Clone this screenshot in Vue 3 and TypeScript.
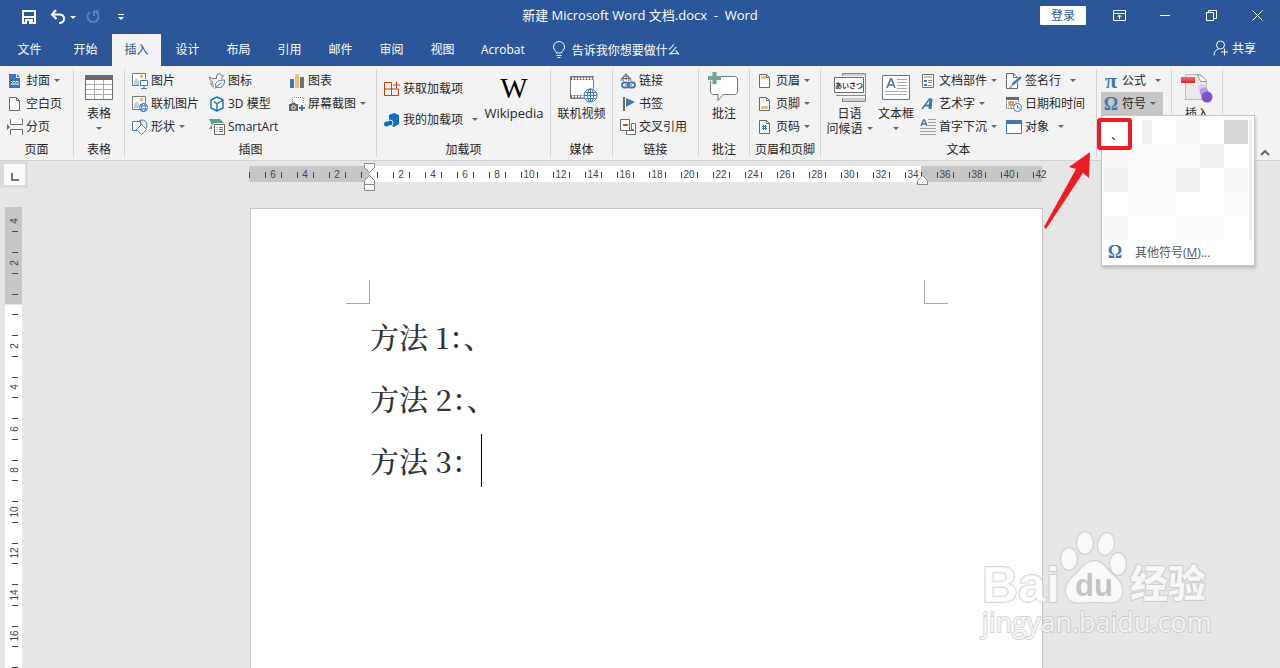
<script setup lang="ts">
interface Command {
  icon: string
  text: string
  arrow?: 'near' | 'far'
}

const tabs = ['文件', '开始', '插入', '设计', '布局', '引用', '邮件', '审阅', '视图', 'Acrobat']
const activeTab = '插入'

const pages: Command[] = [
  { icon: 'cover', text: '封面', arrow: 'near' },
  { icon: 'blank', text: '空白页' },
  { icon: 'break', text: '分页' },
]
const illustrations: Command[][] = [
  [
    { icon: 'picture', text: '图片' },
    { icon: 'online-picture', text: '联机图片' },
    { icon: 'shapes', text: '形状', arrow: 'near' },
  ],
  [
    { icon: 'icons', text: '图标' },
    { icon: 'cube', text: '3D 模型' },
    { icon: 'smartart', text: 'SmartArt' },
  ],
  [
    { icon: 'chart', text: '图表' },
    { icon: 'screenshot', text: '屏幕截图', arrow: 'near' },
  ],
]
const addins: Command[] = [
  { icon: 'store', text: '获取加载项' },
  { icon: 'my-addins', text: '我的加载项', arrow: 'far' },
]
const links: Command[] = [
  { icon: 'link', text: '链接' },
  { icon: 'bookmark', text: '书签' },
  { icon: 'crossref', text: '交叉引用' },
]
const headers: Command[] = [
  { icon: 'header', text: '页眉', arrow: 'near' },
  { icon: 'footer', text: '页脚', arrow: 'near' },
  { icon: 'page-number', text: '页码', arrow: 'near' },
]
const textTools: Command[][] = [
  [
    { icon: 'parts', text: '文档部件', arrow: 'near' },
    { icon: 'wordart', text: '艺术字', arrow: 'near' },
    { icon: 'dropcap', text: '首字下沉', arrow: 'near' },
  ],
  [
    { icon: 'signature', text: '签名行', arrow: 'far' },
    { icon: 'datetime', text: '日期和时间' },
    { icon: 'object', text: '对象', arrow: 'far' },
  ],
]

const windowButtons = [
  { label: '功能区显示选项', path: 'M.5 1.5h12v10H.5zM.5 4.5h12M6.5 10V6M4.5 8l2-2 2 2' },
  { label: '最小化', path: 'M1 6.5h10' },
  { label: '向下还原', path: 'M1.5 3.5h7v8h-7zM3.5 3.5v-2h8v8h-3' },
  { label: '关闭', path: 'M1.5 1.5l10 10M11.5 1.5l-10 10' },
]

const hTicks = Array.from({ length: 50 }, (_, i) => i * 16)
const hNumbers = Array.from({ length: 25 }, (_, i) => (i - 3) * 2)
  .filter((n) => n !== 0)
  .map((n) => ({ value: Math.abs(n), x: 120 + n * 16 }))

const vStep = 20.75
const vTicks = Array.from({ length: 22 }, (_, i) => Math.round(98 + (i - 3.5) * vStep))
const vNumbers = [-4, -2, 2, 4, 6, 8, 10, 12, 14, 16].map((n) => ({
  value: Math.abs(n),
  y: Math.round(97 + n * vStep),
}))

const mosaic = [
  'a', 'g', 'a', 'c', 'a', 'f',
  'c', 'b', 'b', 'b', 'e', 'a',
  'e', 'b', 'b', 'e', 'a', 'd',
  'a', 'b', 'b', 'a', 'a', 'b',
  'c', 'a', 'a', 'b', 'b', 'a',
]
</script>

<template>
  <div class="word">
    <svg class="sprite" aria-hidden="true">
      <symbol id="cover" viewBox="0 0 16 16">
        <path d="M2 1h7v4h4v10H2z" fill="#3f76b4" /><path d="M10 1l3 3h-3z" fill="#3f76b4" />
        <path d="M4 8l1.500 1.500L7 8l1.500 1.500L10 8l1.500 1.500M4 11h8" stroke="#fff" fill="none" />
      </symbol>
      <symbol id="blank" viewBox="0 0 16 16">
        <path d="M2.500 1.500h7l3 3v10h-10z" fill="#fff" stroke="#6a6a6a" /><path d="M9.500 1.500v3h3" fill="none" stroke="#6a6a6a" />
      </symbol>
      <symbol id="break" viewBox="0 0 16 16">
        <path d="M3 0h12v5H3zM3 11h12v5H3z" fill="#fff" /><path d="M3.500 0v5.500h12V0M3.500 16v-5.500h12V16" fill="none" stroke="#6a6a6a" />
        <path d="M0 5l3 3-3 3z" fill="#3f76b4" />
      </symbol>
      <symbol id="picture" viewBox="0 0 16 16">
        <path d="M.5.5h13v12H.5z" fill="#fff" stroke="#777" /><circle cx="9.500" cy="3.500" r="1.800" fill="#eab765" />
        <path d="M2 12V8l2.500-3L7 8v4z" fill="#bcd0e6" /><path d="M7 6h9v9H7z" fill="#f3f3f3" />
        <path d="M8.500 7.500h7v5h-7zM12 13v2M9 15.500h6" fill="#fff" stroke="#3f76b4" />
      </symbol>
      <symbol id="online-picture" viewBox="0 0 16 16">
        <path d="M.5.5h13v13H.5z" fill="#fff" stroke="#777" /><circle cx="9.500" cy="3.500" r="1.800" fill="#eab765" />
        <path d="M2 12V8l2.500-3L7 8v4z" fill="#bcd0e6" />
        <circle cx="11.500" cy="11.500" r="4" fill="#fff" stroke="#3f76b4" />
        <ellipse cx="11.500" cy="11.500" rx="2" ry="4" fill="none" stroke="#3f76b4" />
        <path d="M8 10h7M8 13h7" stroke="#3f76b4" />
      </symbol>
      <symbol id="shapes" viewBox="0 0 16 16">
        <path d="M.5 2.500h8v9h-8z" fill="#fff" stroke="#3f76b4" /><path d="M6 3a5 5 0 1 1 8 6" fill="none" stroke="#3f76b4" />
        <path d="M9.500 5.500l5 5-5 5-5-5z" fill="#fff" stroke="#3f76b4" />
      </symbol>
      <symbol id="icons" viewBox="0 0 16 16">
        <path d="M.5 4c2 2 5 1.500 7 1.500C7 2 8.500.8 10.500.8c1.500 0 2 1.200 2 1.700l2 .5-2 1.500c0 1 0 1-.5 1.500M.5 4c0 3 1 4 3 4.500-1 2 0 3 1.500 3.500M2 9.500C1.500 12 3 14 5 14" fill="none" stroke="#777" />
        <path d="M7 14c-2-5 3-7 8.500-7 .5 6-3.500 9-8.500 7z" fill="#fff" stroke="#3f76b4" /><path d="M5.500 15.500l7-6" stroke="#3f76b4" />
      </symbol>
      <symbol id="cube" viewBox="0 0 16 16">
        <path d="M8 1l6 3v8l-6 3-6-3V4z" fill="#fff" stroke="#0b70c4" stroke-width="1.400" /><path d="M5 5.500L8 8l6-4M8 8v7" fill="none" stroke="#0b70c4" stroke-width="1.400" />
      </symbol>
      <symbol id="smartart" viewBox="0 0 16 16">
        <path d="M0 0h11l4 4H5L3 7v3H0l3-4z" fill="#5c9f88" />
        <path d="M5.500 5.500h10v10h-10z" fill="#fff" stroke="#6a6a6a" />
        <path d="M7.500 8.500h1M10 8.500h4M7.500 10.500h1M10 10.500h4M7.500 12.500h1M10 12.500h4" stroke="#777" />
      </symbol>
      <symbol id="chart" viewBox="0 0 16 16">
        <path d="M1 6h4v9H1z" fill="#3f76b4" /><path d="M6 1h4v14H6z" fill="#e8c27d" /><path d="M11 4h4v11h-4z" fill="#737373" />
      </symbol>
      <symbol id="screenshot" viewBox="0 0 16 16">
        <path d="M3.500 8V1.500h11V8" fill="#fff" stroke="#888" stroke-dasharray="1 1" />
        <path d="M0 8h2l1-1.500h3L7 8h2v7H0z" fill="#686868" /><circle cx="4.500" cy="11.500" r="1.800" fill="none" stroke="#fff" />
        <path d="M13 9v6M10 12h6" stroke="#3f76b4" stroke-width="2" />
      </symbol>
      <symbol id="store" viewBox="0 0 16 16">
        <path d="M.5 1.500h7v13h-7zM.5 8h14v6.500H7.500M9 4h7M12.500.5v7" fill="none" stroke="#d83b01" />
      </symbol>
      <symbol id="my-addins" viewBox="0 0 16 16">
        <path d="M5 3l5-2 5 2v9l-5 3-2-1V9L5 8z" fill="#0b70c4" /><circle cx="6" cy="11" r="3" fill="#0b70c4" stroke="#f3f3f3" /><circle cx="2.500" cy="12" r="2.500" fill="#0b70c4" />
      </symbol>
      <symbol id="link" viewBox="0 0 16 16">
        <path d="M1 8a5 5 0 1 1 10 0M1 5.500h10M6 1v6M3.500 8c-1-3 1-7 2.500-7s3.500 4 2.500 7" fill="none" stroke="#6a6a6a" />
        <rect x="2" y="9.500" width="7" height="5" rx="2.500" fill="none" stroke="#3f76b4" stroke-width="1.800" />
        <rect x="8" y="9.500" width="7" height="5" rx="2.500" fill="none" stroke="#3f76b4" stroke-width="1.800" /><path d="M5 12h7" stroke="#3f76b4" />
      </symbol>
      <symbol id="bookmark" viewBox="0 0 16 16">
        <path d="M3 1h2v14H3z" fill="#6a6a6a" /><path d="M6 2l9 4-9 5z" fill="#3f76b4" />
      </symbol>
      <symbol id="crossref" viewBox="0 0 16 16">
        <path d="M.5.5h9v11h-9z" fill="#fff" stroke="#6a6a6a" /><path d="M7.500 15.500h8v-11h-4v7h-5v4z" fill="#fff" stroke="#6a6a6a" />
        <path d="M3 5h5v2H3zM11 10h3v2h-3z" fill="#d24726" />
      </symbol>
      <symbol id="header" viewBox="0 0 16 16">
        <path d="M2.500 1.500h7l3 3v10h-10z" fill="#fff" stroke="#6a6a6a" /><path d="M4 3h5v3H4z" fill="#e8c27d" /><path d="M9.500 1.500v3h3" fill="none" stroke="#6a6a6a" />
      </symbol>
      <symbol id="footer" viewBox="0 0 16 16">
        <path d="M2.500 1.500h7l3 3v10h-10z" fill="#fff" stroke="#6a6a6a" /><path d="M4 10h7v3H4z" fill="#e8c27d" /><path d="M9.500 1.500v3h3" fill="none" stroke="#6a6a6a" />
      </symbol>
      <symbol id="page-number" viewBox="0 0 16 16">
        <path d="M2.500 1.500h7l3 3v10h-10z" fill="#fff" stroke="#6a6a6a" /><path d="M9.500 1.500v3h3" fill="none" stroke="#6a6a6a" />
        <path d="M6.500 6v5M8.500 6v5M5 7.500h5M5 9.500h5" stroke="#3f76b4" />
      </symbol>
      <symbol id="parts" viewBox="0 0 16 16">
        <path d="M2.500 1.500h11v13h-11z" fill="#fff" stroke="#6a6a6a" /><path d="M4 3h8v2H4z" fill="#e8c27d" />
        <path d="M4 7h3v2H4zM4 11h3v2H4z" fill="#3f76b4" /><path d="M8 7.500h4M8 9.500h4M8 12.500h4" stroke="#888" />
      </symbol>
      <symbol id="wordart" viewBox="0 0 16 16">
        <path d="M2 13L9.500 3h2" fill="none" stroke="#3f76b4" stroke-width="1.500" /><path d="M11 3L10 13" stroke="#3f76b4" stroke-width="3" /><path d="M5 9.500h6" stroke="#3f76b4" stroke-width="2" />
      </symbol>
      <symbol id="dropcap" viewBox="0 0 16 16">
        <path d="M1 7l2.500-6h1L7 7M2 5h4" fill="none" stroke="#3f76b4" stroke-width="1.400" />
        <path d="M8 .5h8M8 3.500h8M8 6.500h8M0 9.500h16M0 12.500h16M0 15.500h16" stroke="#a0a0a0" />
      </symbol>
      <symbol id="signature" viewBox="0 0 16 16">
        <path d="M.5.500h7l4 4v11H.5z" fill="#fff" stroke="#6a6a6a" /><path d="M7.500.5v4h4" fill="none" stroke="#6a6a6a" />
        <path d="M5 14l1-4 8-7 2 2-8 7z" fill="#3f76b4" stroke="#f3f3f3" stroke-width=".6" /><path d="M3 14h3" stroke="#3f76b4" />
      </symbol>
      <symbol id="datetime" viewBox="0 0 16 16">
        <path d="M.5 3.500h12v9H.5z" fill="#fff" stroke="#777" stroke-dasharray="2 1" /><path d="M0 1h13v3H0z" fill="#6a6a6a" />
        <path d="M2 6h1M2 8h1M2 10h1M9 6h2M4 11h2" stroke="#888" /><path d="M4 6h3v3H4z" fill="none" stroke="#e0782f" stroke-width="1.500" />
        <circle cx="11.500" cy="11.500" r="4" fill="#fff" stroke="#3f76b4" /><path d="M11.500 9v3H14" fill="none" stroke="#3f76b4" />
      </symbol>
      <symbol id="object" viewBox="0 0 16 16">
        <path d="M.5 1.500h15v13H.5z" fill="#fff" stroke="#3f76b4" /><path d="M0 1h16v4H0z" fill="#3f76b4" />
      </symbol>
      <symbol id="arrow" viewBox="0 0 6 3"><path d="M0 0h6L3 3z" fill="#666" /></symbol>
    </svg>

    <header class="top">
      <div class="titlebar">
        <div class="quick">
          <button class="plain" aria-label="保存">
            <svg width="16" height="16" fill="none" stroke="#fff"><path d="M2 2h12v12H2z" stroke-width="2" /><path d="M2 8h12" stroke-width="2" /><path d="M4 10h8v5H4z" fill="#fff" stroke="none" /><path d="M6 12h2v3H6z" fill="#2b579a" stroke="none" /></svg>
          </button>
          <button class="plain undo" aria-label="撤消">
            <svg width="16" height="16" fill="none" stroke="#fff" stroke-width="2"><path d="M2 5.500h7c4 0 5 2 5 4 0 3-2 4.500-5 4.500" /><path d="M6 1L2 5.500 6.500 10" /></svg>
            <svg class="tiny" width="6" height="3"><path d="M0 0h6L3 3z" fill="#fff" /></svg>
          </button>
          <button class="plain" aria-label="重复" disabled>
            <svg width="16" height="16" fill="none" stroke="#5f82b8" stroke-width="2"><path d="M5 3a5.500 5.500 0 1 0 6 0" /><path d="M9 7V2.500h5" /></svg>
          </button>
          <button class="plain more" aria-label="自定义快速访问工具栏">
            <svg width="6" height="8"><path d="M0 1.500h6" stroke="#fff" /><path d="M0 4h6L3 7z" fill="#fff" /></svg>
          </button>
        </div>
        <h1>新建 Microsoft Word 文档.docx&nbsp; -&nbsp; Word</h1>
        <div class="window-controls">
          <button class="login">登录</button>
          <button v-for="b in windowButtons" :key="b.label" class="win" :aria-label="b.label">
            <svg width="13" height="13"><path :d="b.path" fill="none" stroke="#fff" /></svg>
          </button>
        </div>
      </div>
      <nav class="tabs">
        <button v-for="t in tabs" :key="t" class="tab" :class="{ active: t === activeTab }">{{ t }}</button>
        <label class="tell">
          <svg width="12" height="18" fill="none" stroke="#fff"><path d="M3.500 12c0-2-3-3-3-6a5.500 5.500 0 0 1 11 0c0 3-3 4-3 6zM3.500 14.500h5M4.500 16.500h3" /></svg>
          <input type="text" placeholder="告诉我你想要做什么" aria-label="告诉我你想要做什么" />
        </label>
        <button class="share">
          <svg width="16" height="16" fill="none" stroke="#fff"><circle cx="7.500" cy="5" r="4" /><path d="M1 15.500c0-4 2-5.500 4.500-6.500M11.500 8.500v7M8 12h7" /></svg>
          共享
        </button>
      </nav>
    </header>

    <section class="ribbon">
      <div class="group g-pages">
        <div class="body stack">
          <button v-for="c in pages" :key="c.text" class="cmd">
            <svg class="ico"><use :href="'#' + c.icon" /></svg>{{ c.text }}
            <svg v-if="c.arrow" class="arr" :class="c.arrow"><use href="#arrow" /></svg>
          </button>
        </div>
        <div class="caption">页面</div>
      </div>

      <div class="group g-table">
        <button class="big">
          <svg class="big-ico" viewBox="0 0 32 32"><path d="M2.500 4.500h27v24h-27z" fill="#fff" stroke="#6a6a6a" /><path d="M2 4h28v5H2z" fill="#6a6a6a" /><path d="M3 13.500h26M3 18.500h26M3 23.500h26M11.500 9v19M20.500 9v19" stroke="#aaa" /></svg>
          表格
          <svg class="arr"><use href="#arrow" /></svg>
        </button>
        <div class="caption">表格</div>
      </div>

      <div class="group g-illus">
        <div class="body cols">
          <div v-for="(col, i) in illustrations" :key="i" class="stack">
            <button v-for="c in col" :key="c.text" class="cmd">
              <svg class="ico"><use :href="'#' + c.icon" /></svg>{{ c.text }}
              <svg v-if="c.arrow" class="arr" :class="c.arrow"><use href="#arrow" /></svg>
            </button>
          </div>
        </div>
        <div class="caption">插图</div>
      </div>

      <div class="group g-addins">
        <div class="body cols">
          <div class="stack tall">
            <button v-for="c in addins" :key="c.text" class="cmd">
              <svg class="ico"><use :href="'#' + c.icon" /></svg>{{ c.text }}
              <svg v-if="c.arrow" class="arr" :class="c.arrow"><use href="#arrow" /></svg>
            </button>
          </div>
          <button class="big latin"><span class="wiki" aria-hidden="true">W</span>Wikipedia</button>
        </div>
        <div class="caption">加载项</div>
      </div>

      <div class="group g-media">
        <button class="big">
          <svg class="big-ico" viewBox="0 0 32 32">
            <path d="M4.500 5.500h23v22h-23z" fill="#fff" stroke="#777" /><path d="M5 7.500h23M5 25.500h14" stroke="#777" stroke-width="3" /><path d="M6 7.500h22M6 25.500h13" stroke="#fff" stroke-width="2" stroke-dasharray="2 1" />
            <circle cx="24.500" cy="24.500" r="7.500" fill="#f3f3f3" /><circle cx="24.500" cy="24.500" r="6.500" fill="#fff" stroke="#3f76b4" /><ellipse cx="24.500" cy="24.500" rx="3" ry="6.500" fill="none" stroke="#3f76b4" /><path d="M18 24.500h13M19.500 21.500h10M19.500 27.500h10M24.500 18v13" stroke="#3f76b4" />
          </svg>
          联机视频
        </button>
        <div class="caption">媒体</div>
      </div>

      <div class="group g-links">
        <div class="body stack">
          <button v-for="c in links" :key="c.text" class="cmd">
            <svg class="ico"><use :href="'#' + c.icon" /></svg>{{ c.text }}
          </button>
        </div>
        <div class="caption">链接</div>
      </div>

      <div class="group g-comment">
        <button class="big">
          <svg class="big-ico" viewBox="0 0 32 32"><path d="M4.500 5.500h23l2 2v14l-2 2H15l-5 6v-6H4.500l-2-2v-14z" fill="#fff" stroke="#777" /><path d="M3 1h7v3h3v6h-3v4H3v-4H0V4h3z" fill="#f3f3f3" /><path d="M6.500 1v12M0 7h13" stroke="#6ca893" stroke-width="4" /></svg>
          批注
        </button>
        <div class="caption">批注</div>
      </div>

      <div class="group g-header">
        <div class="body stack">
          <button v-for="c in headers" :key="c.text" class="cmd">
            <svg class="ico"><use :href="'#' + c.icon" /></svg>{{ c.text }}
            <svg v-if="c.arrow" class="arr" :class="c.arrow"><use href="#arrow" /></svg>
          </button>
        </div>
        <div class="caption">页眉和页脚</div>
      </div>

      <div class="group g-text">
        <div class="body cols">
          <button class="big">
            <svg class="big-ico" viewBox="0 0 32 32">
              <path d="M8.500 2.500h23v28h-23z" fill="#d0d0d0" stroke="#888" /><path d="M0 5h31v22H0z" fill="#f3f3f3" /><path d="M.5 6.500h29v15H.5z" fill="#fff" stroke="#6a6a6a" /><path d="M2 24.500h30M31.500 8v16" stroke="#888" />
              <text class="kana" x="15" y="17" text-anchor="middle">あいさつ</text>
            </svg>
            <span>日语</span>
            <span class="line">问候语 <svg class="arr"><use href="#arrow" /></svg></span>
          </button>
          <button class="big">
            <svg class="big-ico" viewBox="0 0 32 32"><path d="M2.500 4.500h27v24h-27z" fill="#fff" stroke="#777" /><path d="M7 17l3.500-9h1l3.500 9M8 14h6" fill="none" stroke="#3f76b4" stroke-width="1.600" /><path d="M17 8.500h10M17 11.500h10M17 14.500h10M17 17.500h10M5 20.500h22M5 23.500h22" stroke="#aaa" /></svg>
            文本框
            <svg class="arr"><use href="#arrow" /></svg>
          </button>
          <div v-for="(col, i) in textTools" :key="i" class="stack">
            <button v-for="c in col" :key="c.text" class="cmd">
              <svg class="ico"><use :href="'#' + c.icon" /></svg>{{ c.text }}
              <svg v-if="c.arrow" class="arr" :class="c.arrow"><use href="#arrow" /></svg>
            </button>
          </div>
        </div>
        <div class="caption">文本</div>
      </div>

      <div class="group g-symbol">
        <button class="cmd"><span class="greek pi">π</span>公式 <svg class="arr far"><use href="#arrow" /></svg></button>
        <div class="anchor">
          <button class="cmd pressed"><span class="greek">Ω</span>符号 <svg class="arr near"><use href="#arrow" /></svg></button>
          <div class="menu">
            <div class="mosaic">
              <button v-for="(m, i) in mosaic" :key="i" :class="'m-' + m" aria-label="符号"></button>
            </div>
            <button class="more-symbols"><span class="greek">Ω</span><span>其他符号(<u>M</u>)...</span></button>
          </div>
          <div class="highlight">、</div>
          <svg class="pointer" width="48" height="78"><path d="M0 75L32 17l-7-2L46 0l-1 26-6-5L2 77z" fill="#ee1c25" /></svg>
        </div>
      </div>

      <div class="group g-media2">
        <button class="big">
          <svg class="big-ico" viewBox="0 0 32 32">
            <defs><linearGradient id="red" x1="0" y1="0" x2="0" y2="1"><stop offset="0" stop-color="#f0716f" /><stop offset="1" stop-color="#d6232b" /></linearGradient></defs>
            <path d="M4.500 3.500h15l6 7v18h-21z" fill="#e9e9ec" stroke="#bbb" /><path d="M16.500 3.500l3 7h6c-2-3-4-6-9-7z" fill="#fff" stroke="#999" />
            <path d="M0 6h14v6H0z" fill="url(#red)" /><circle cx="21" cy="17" r="4" fill="#d9cff0" /><circle cx="23" cy="21" r="4.500" fill="#b49ce2" /><circle cx="26" cy="26" r="5.500" fill="#8050cf" />
          </svg>
          插入
        </button>
      </div>
      <button class="collapse" aria-label="折叠功能区"><svg width="10" height="6"><path d="M1 5l4-4 4 4" fill="none" stroke="#666" stroke-width="2" /></svg></button>
    </section>

    <main class="editor">
      <button class="tabstop" aria-label="左对齐制表符"><span><svg width="8" height="8"><path d="M1 0v7h7" fill="none" stroke="#777" stroke-width="2" /></svg></span></button>
      <svg class="hruler" width="793" height="30">
        <path d="M0 0h120v16H0zM672 0h121v16H672z" fill="#c6c6c6" /><path d="M120 0h552v16H120z" fill="#fff" />
        <path v-for="x in hTicks" :key="x" :d="`M${x + 0.5} 6v6`" stroke="#444" />
        <text v-for="n in hNumbers" :key="n.x" :x="n.x" y="12" text-anchor="middle">{{ n.value }}</text>
        <g fill="#fff" stroke="#8a8a8a"><path d="M115.500-2.500h10v4l-5 5-5-5z" /><path d="M115.500 18.500v-4l5-5 5 5v4zM115.500 18.500h10v6h-10z" /><path d="M668.500 18.500v-4l5-5 5 5v4z" /></g>
      </svg>
      <svg class="vruler" width="17" height="461">
        <path d="M0 0h17v97H0z" fill="#c6c6c6" /><path d="M0 98h17v363H0z" fill="#fff" />
        <path v-for="y in vTicks" :key="y" :d="`M7 ${y - 0.5}h6`" stroke="#444" />
        <text v-for="n in vNumbers" :key="n.y" :transform="`translate(13 ${n.y}) rotate(-90)`" text-anchor="middle">{{ n.value }}</text>
      </svg>
      <article class="page">
        <div class="corners"><i class="corner left"></i><i class="corner right"></i></div>
        <div class="content">
          <p>方法 1：、</p>
          <p>方法 2：、</p>
          <p>方法 3：<span class="caret"></span></p>
        </div>
      </article>
    </main>

    <svg class="watermark" width="240" height="120" role="img" aria-label="Baidu 经验 jingyan.baidu.com">
      <g fill="#fff" fill-opacity=".75" stroke="#bdbdbd" stroke-opacity=".6" stroke-width="2" paint-order="stroke">
        <text x="0" y="76" class="brand">Bai</text>
        <ellipse cx="87" cy="33" rx="8" ry="11" /><ellipse cx="103" cy="17" rx="8" ry="11" /><ellipse cx="124" cy="18" rx="8" ry="11" transform="rotate(12 124 18)" /><ellipse cx="136" cy="38" rx="8" ry="11" />
        <path d="M112 35c8 0 12 7 18 13 7 6 12 12 10 20-3 12-16 8-28 8s-25 4-28-8c-2-8 3-14 10-20 6-6 10-13 18-13z" />
        <text x="148" y="71" class="cn">经验</text>
        <text x="0" y="106" class="url">jingyan.baidu.com</text>
      </g>
      <text x="93" y="70" class="du">du</text>
    </svg>
  </div>
</template>

<style>
body { margin: 0; overflow: hidden; }
</style>

<style scoped>
.word {
  position: relative;
  display: flex;
  flex-direction: column;
  height: 100vh;
  overflow: hidden;
  background: #e6e6e6;
  color: #262626;
  font: 12px/15px "Open Sans", "Noto Sans CJK SC", sans-serif;
}
.sprite { position: absolute; width: 0; height: 0; }
button {
  margin: 0;
  padding: 0;
  border: 0;
  background: none;
  color: inherit;
  font: inherit;
  white-space: nowrap;
}
svg { flex: none; display: block; }

.top { background: #2b579a; color: #fff; }
.titlebar { display: grid; grid-template-columns: 1fr auto 1fr; height: 34px; }
.titlebar h1 { margin: 0; font-size: 13px; font-weight: 400; line-height: 30px; white-space: pre; }
.quick { display: flex; align-items: center; padding-left: 21px; gap: 9px; }
.plain { display: flex; align-items: center; gap: 4px; }
.undo { padding-left: 4px; }
.more { padding-left: 8px; }
.window-controls { display: flex; justify-content: flex-end; height: 30px; }
.login { width: 46px; height: 19px; margin: 6px 10px 0 0; background: #fff; color: #2b579a; border-radius: 1px; }
.win { display: grid; place-items: center; width: 46px; }

.tabs { display: flex; gap: 2px; height: 32px; }
.tab { min-width: 49px; padding: 0 12px 2px; }
.tab:first-child { min-width: 59px; }
.tab.active { background: #f3f3f3; color: #2b579a; }
.tell { display: flex; align-items: center; gap: 7px; margin-left: 14px; }
.tell input { width: 160px; padding: 0; border: 0; background: none; color: #fff; font: inherit; }
.tell input::placeholder { color: #fff; opacity: 1; }
.share { display: flex; align-items: center; gap: 3px; margin: 0 24px 4px auto; }

.ribbon { display: flex; padding: 3px 0; background: #f3f3f3; border-bottom: 1px solid #d0d0d0; }
.group { box-sizing: border-box; display: flex; flex: none; flex-direction: column; height: 88px; border-right: 1px solid #d4d4d4; }
.caption { margin-top: auto; text-align: center; }
.stack { display: flex; flex-direction: column; align-items: flex-start; }
.cols { display: grid; }
.cmd { display: flex; align-items: center; gap: 3px; height: 23px; }
.ico { width: 16px; height: 16px; }
.arr { display: inline-block; width: 6px; height: 3px; }
.arr.near { margin-left: 1px; }
.arr.far { margin-left: 6px; }
.big { display: flex; flex-direction: column; align-items: center; padding-top: 2px; }
.big.latin { font-size: 13px; }
.big-ico { width: 32px; height: 32px; margin-bottom: 3px; overflow: visible; }
.big > .arr { margin-top: 6px; }
.kana { font: bold 7px "Noto Sans CJK JP", sans-serif; fill: #333; }
.line { display: flex; align-items: center; gap: 4px; }
.tall { padding-top: 4px; }
.tall .cmd { height: 31px; }
.wiki { height: 35px; font: 29px/34px "Liberation Serif", serif; color: #000; }
.greek { width: 16px; color: #3f76b4; font: bold 18px/20px "Liberation Serif", serif; text-align: center; }
.pi { font-size: 22px; }

.g-pages { width: 74px; }
.g-pages .body { padding-left: 7px; }
.g-table { width: 51px; }
.g-illus { width: 252px; }
.g-illus .body { grid-template-columns: 77px 80px auto; padding-left: 7px; }
.g-addins { width: 174px; }
.g-addins .body { grid-template-columns: 101px 58px; padding-left: 7px; }
.g-media { width: 62px; }
.g-links { width: 86px; }
.g-links .body { padding-left: 7px; }
.g-comment { width: 51px; }
.g-header { width: 71px; }
.g-header .body { padding-left: 7px; }
.g-text { width: 276px; }
.g-text .body { grid-template-columns: 45px 36px 80px auto; gap: 6px; padding-left: 6px; }
.g-symbol { width: 75px; padding-left: 4px; }
.g-symbol .cmd { padding-left: 2px; }
.g-media2 { width: 51px; }
.collapse { margin: auto 10px 1px auto; }

.anchor { position: relative; width: 62px; }
.pressed { width: 100%; background: #c6c6c6; }
.menu {
  position: absolute;
  z-index: 2;
  top: 100%;
  left: 0;
  box-sizing: border-box;
  width: 154px;
  padding: 4px 2px 1px;
  background: #fff;
  border: 1px solid #c6c6c6;
  box-shadow: 1px 2px 3px rgba(0, 0, 0, 0.2);
}
.mosaic { display: grid; grid-template-columns: repeat(6, 24px); grid-auto-rows: 24px; border-right: 3px solid #ececec; }
.m-b { background: #fbfbfb; }
.m-c { background: #f8f8f8; }
.m-d { background: #f6f6f6; }
.m-e { background: #f1f1f1; }
.m-f { background: #d8d8d8; }
.m-g { background: linear-gradient(to right, #fff 14px, #f0f0f0 14px); }
.more-symbols { display: flex; align-items: center; gap: 12px; height: 24px; padding-left: 3px; color: #555; }
.highlight {
  position: absolute;
  z-index: 3;
  top: 26px;
  left: -4px;
  box-sizing: border-box;
  width: 35px;
  height: 32px;
  padding-left: 10px;
  border: 4px solid #ee1c25;
  border-radius: 3px;
  background: #fff;
  line-height: 28px;
}
.pointer { position: absolute; z-index: 3; top: 60px; left: -57px; }

.editor { display: grid; flex: 1; grid-template-columns: 28px 1fr 15px; grid-template-rows: 46px 1fr; min-height: 0; }
.tabstop { width: 28px; height: 27px; padding: 3px 3px 3px 4px; background: #dadada; }
.tabstop span { display: grid; place-items: end center; height: 21px; box-sizing: border-box; padding: 0 0 4px 1px; background: #fbfbfb; }
.hruler { justify-self: center; margin: 5px 2px 0 0; overflow: visible; }
.hruler text, .vruler text { font: 10px "Liberation Sans", sans-serif; fill: #444; }
.vruler { grid-row: 2; margin-left: 5px; }
.page {
  box-sizing: border-box;
  grid-column: 2;
  justify-self: center;
  width: 100%;
  max-width: 793px;
  margin-top: 1px;
  padding: 71px 94px 0 95px;
  background: #fff;
  border: 1px solid #c6c6c6;
  border-bottom: 0;
}
.corners { display: flex; justify-content: space-between; }
.corner { box-sizing: border-box; width: 24px; height: 24px; border-bottom: 1px solid #a6a6a6; }
.corner.left { border-right: 1px solid #a6a6a6; }
.corner.right { border-left: 1px solid #a6a6a6; }
.content { padding: 2px 24px 0; font: 500 29px/62px "Noto Serif CJK SC", "Noto Serif SC", "Liberation Serif", "Noto Sans CJK SC", serif; color: #333; }
.content p { height: 62px; margin: 0; }
.caret { display: inline-block; width: 1px; height: 53px; margin-bottom: 10px; background: #000; vertical-align: middle; }

.watermark { position: absolute; right: 58px; bottom: 22px; overflow: visible; }
.brand { font: bold 50px "Liberation Sans", sans-serif; }
.cn { font: 900 38px "Noto Sans CJK SC", sans-serif; }
.url { font: 27px "Open Sans", sans-serif; }
.du { font: bold 31px "Liberation Sans", sans-serif; fill: #c4c4c4; }
</style>
